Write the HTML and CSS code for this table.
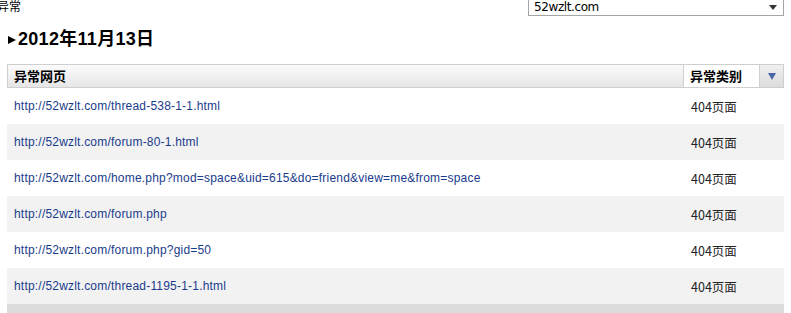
FILE: index.html
```html
<!DOCTYPE html>
<html>
<head>
<meta charset="utf-8">
<link rel="stylesheet" href="styles.css">
</head>
<body>
<div class="top">
  <span class="label">异常</span>
  <div class="select"><span>52wzlt.com</span><span class="sel-arrow"></span></div>
</div>
<h2 class="date"><span class="tri"></span>2012年11月13日</h2>
<div class="table">
  <div class="thead">
    <div class="th th-url">异常网页</div>
    <div class="th th-type">异常类别</div>
    <div class="th th-sort"><span class="sort-arrow"></span></div>
  </div>
  <div class="row"><a class="url" href="#">http://52wzlt.com/thread-538-1-1.html</a><span class="type">404页面</span></div>
  <div class="row alt"><a class="url" href="#">http://52wzlt.com/forum-80-1.html</a><span class="type">404页面</span></div>
  <div class="row"><a class="url" href="#">http://52wzlt.com/home.php?mod=space&amp;uid=615&amp;do=friend&amp;view=me&amp;from=space</a><span class="type">404页面</span></div>
  <div class="row alt"><a class="url" href="#">http://52wzlt.com/forum.php</a><span class="type">404页面</span></div>
  <div class="row"><a class="url" href="#">http://52wzlt.com/forum.php?gid=50</a><span class="type">404页面</span></div>
  <div class="row alt"><a class="url" href="#">http://52wzlt.com/thread-1195-1-1.html</a><span class="type">404页面</span></div>
  <div class="tfoot"></div>
</div>
</body>
</html>
```
FILE: styles.css
```css
html, body { margin: 0; padding: 0; background: #fff; }
body { font-family: "Liberation Sans", "Noto Sans CJK SC", sans-serif; color: #000; overflow: hidden; }

.top { display: flex; align-items: flex-start; height: 16px; }
.label { font-size: 12px; line-height: 12px; margin-left: -3px; font-family: "Noto Sans CJK SC", sans-serif; }
.select {
  margin-left: auto; margin-right: 7px; margin-top: -1px;
  width: 254px; height: 15px; border: 1px solid #a5a5a5; background: #fff;
  display: flex; align-items: center; justify-content: space-between;
  font-family: "DejaVu Sans", sans-serif; font-size: 12px; line-height: 15px; color: #000;
  box-sizing: content-box;
}
.select span:first-child { padding-left: 5px; letter-spacing: -0.4px; }
.sel-arrow { width: 0; height: 0; border-left: 4px solid transparent; border-right: 4px solid transparent; border-top: 5px solid #333; margin-right: 6px; }

.date { margin: 12px 0 0 8px; font-size: 18px; line-height: 22px; font-weight: bold; height: 36px; font-family: "Liberation Sans", "Noto Sans CJK SC", sans-serif; letter-spacing: 0.3px; }
.tri { display: inline-block; width: 0; height: 0; border-top: 4px solid transparent; border-bottom: 4px solid transparent; border-left: 8px solid #000; margin-right: 2px; vertical-align: 1px; }

.table { margin-left: 7px; width: 777px; }
.thead {
  display: grid; grid-template-columns: 1fr 76px 24px; height: 22px;
  border: 1px solid #cfcfcf;
  background: linear-gradient(#fbfbfb, #e6e6e6);
}
.th { font-family: "Noto Sans CJK SC", sans-serif; font-weight: bold; font-size: 13px; line-height: 22px; }
.th-url { padding-left: 6px; }
.th-type { background: #fff; padding-left: 6px; border-left: 1px solid #d0d0d0; }
.th-sort { display: flex; align-items: center; justify-content: center; border-left: 1px solid #d0d0d0; background: linear-gradient(#f0f0f0, #dcdcdc); }
.sort-arrow { width: 0; height: 0; border-left: 4px solid transparent; border-right: 4px solid transparent; border-top: 7px solid #4a68a8; }

.row { display: grid; grid-template-columns: 1fr 100px; height: 36px; align-items: center; background: #fff; }
.row.alt { background: #f2f2f2; }
.url { padding-left: 7px; font-size: 12px; letter-spacing: 0.2px; color: #1a3b8c; text-decoration: none; font-family: "Liberation Sans", sans-serif; }
.type { font-size: 12.5px; color: #222; padding-left: 7px; font-family: "Noto Sans CJK SC", sans-serif; }
.tfoot { height: 20px; background: #dcdcdc; }
```
